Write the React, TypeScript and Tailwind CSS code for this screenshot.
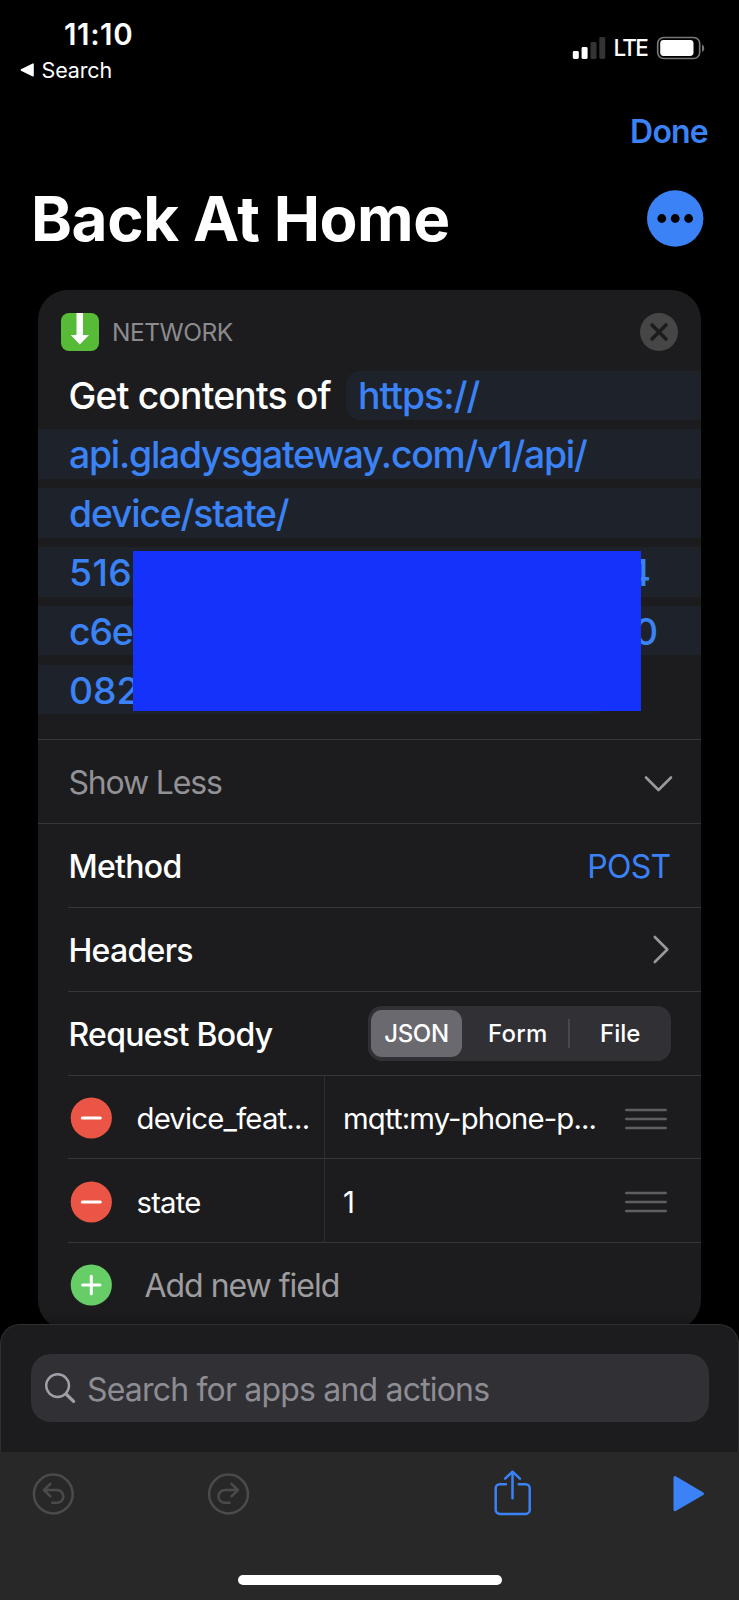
import type { ReactNode } from "react";

function StatusBar() {
  return (
    <div className="flex h-[96px] justify-between">
      <div className="flex flex-col pt-[16px]">
        <div className="pl-[64px] text-[29.5px] font-semibold leading-[36px] tracking-[0.02em] text-white">11:10</div>
        <div className="flex items-center pl-[20px] pt-[4px]">
          <svg width="15" height="14" viewBox="0 0 15 14" className="shrink-0">
            <path d="M1.4 7 L13 1.2 V12.8 Z" fill="#fff" stroke="#fff" strokeWidth="1.6" strokeLinejoin="round" />
          </svg>
          <span className="pl-[6.5px] text-[21.5px] leading-[28px] tracking-[-0.007em] text-white">Search</span>
        </div>
      </div>
      <div className="flex h-[95px] items-center pr-[34.5px]">
        <svg width="34" height="22" viewBox="0 0 34 22" className="mr-[8px]">
          <rect x="0.8" y="14" width="6" height="8" rx="1.4" fill="#fff" />
          <rect x="9.6" y="10" width="6" height="12" rx="1.4" fill="#fff" />
          <rect x="18.5" y="5" width="6" height="17" rx="1.4" fill="#333" />
          <rect x="27.3" y="0" width="6" height="22" rx="1.4" fill="#333" />
        </svg>
        <span className="w-[35px] whitespace-nowrap pt-px text-[22.5px] font-medium leading-[28px] tracking-[-0.08em] text-white">LTE</span>
        <svg width="49" height="24" viewBox="0 0 49 24" className="ml-[7px]">
          <rect x="1.7" y="1.5" width="42" height="21" rx="6" fill="none" stroke="#777" strokeWidth="1.7" />
          <rect x="4.2" y="4" width="33.3" height="16" rx="3.4" fill="#fff" />
          <path d="M46 8.5 C49 10 49 14.5 46 16 Z" fill="#777" />
        </svg>
      </div>
    </div>
  );
}

function UrlLine({ children }: { children?: ReactNode }) {
  return (
    <div className="mb-[9.2px] flex h-[49.6px] items-center whitespace-nowrap bg-[#1e222a] pl-[31px] pt-[2.5px] text-[37.3px] font-medium text-[#3b82f7]">
      {children}
    </div>
  );
}

function Row({ label, inset = true, children }: { label: string; inset?: boolean; children?: ReactNode }) {
  return (
    <div>
      <div className={inset ? "ml-[30px] h-px bg-[#363638]" : "h-px bg-[#363638]"} />
      <div className="flex h-[83px] items-center justify-between pl-[30.5px] pr-[30.5px] text-[32px] font-medium tracking-[-0.022em] text-white">
        <span className="pt-[3px]">{label}</span>
        {children}
      </div>
    </div>
  );
}

function Field({ name, value }: { name: string; value: string }) {
  return (
    <div className="ml-[30px] flex h-[83.5px] items-center border-t border-[#363638] text-[29.3px] text-white">
      <svg width="42" height="42" viewBox="0 0 42 42" className="ml-[2px] mt-[2px] shrink-0">
        <circle cx="21.3" cy="21" r="20.6" fill="#eb5545" />
        <path d="M12.3 21 H30.3" stroke="#fff" strokeWidth="3" strokeLinecap="round" />
      </svg>
      <div className="flex h-full w-[213px] items-center whitespace-nowrap border-r border-[#2e2e30] pl-[24.5px] pt-[4px] tracking-[-0.027em]">{name}</div>
      <div className="flex-1 whitespace-nowrap pl-[18px] pt-[4px] tracking-[-0.029em]">{value}</div>
      <svg width="42" height="22" viewBox="0 0 42 22" className="mr-[34px] mt-[3px] shrink-0">
        <path d="M1.2 2 H40.8 M1.2 11 H40.8 M1.2 20 H40.8" stroke="#5f5f62" strokeWidth="2.4" strokeLinecap="round" />
      </svg>
    </div>
  );
}

function ActionCard() {
  return (
    <section className="mx-[38px] h-[1040px] overflow-hidden rounded-[30px] bg-[#1c1c1e]">
      <header className="flex h-[80.6px] items-center pl-[23px] pr-[23px] pt-[3px]">
        <svg width="38" height="38" viewBox="0 0 38 38">
          <rect width="38" height="38" rx="8" fill="#57bb37" />
          <path d="M15.5 0 H22 V22 H28 L18.8 31.5 L9.8 22 H15.5 Z" fill="#fff" />
        </svg>
        <span className="flex-1 pl-[13px] pt-[2px] text-[24.5px] tracking-[-0.019em] text-[#8b8b8e]">NETWORK</span>
        <svg width="38" height="38" viewBox="0 0 38 38">
          <circle cx="19" cy="19" r="19" fill="#464646" />
          <path d="M12 12 L26 26 M26 12 L12 26" stroke="#1c1c1e" strokeWidth="3.6" strokeLinecap="round" />
        </svg>
      </header>

      <div className="relative h-[368.4px]">
        <div className="mb-[9.2px] flex h-[49.6px] items-center whitespace-nowrap pl-[30.5px] text-[37.3px] font-medium text-white">
          <span className="w-[277.5px] pt-[2px] tracking-[-0.022em]">Get contents of</span>
          <span className="flex h-full flex-1 items-center rounded-l-[14px] bg-[#1e222a] pl-[12px] pt-[2px] tracking-[-0.025em] text-[#3b82f7]">https://</span>
        </div>
        <UrlLine><span className="tracking-[-0.033em]">api.gladysgateway.com/v1/api/</span></UrlLine>
        <UrlLine><span className="tracking-[-0.031em]">device/state/</span></UrlLine>
        <UrlLine>
          <span className="w-[557.5px] tracking-[0.01em]">516</span>
          <span>4</span>
        </UrlLine>
        <UrlLine>
          <span className="w-[565px] tracking-[-0.03em]">c6e</span>
          <span>0</span>
        </UrlLine>
        <div className="flex h-[49.6px] w-[570px] items-center rounded-r-[14px] bg-[#1e222a] pl-[31px] pt-[2.5px] text-[37.3px] font-medium text-[#3b82f7]">082</div>
        <div className="absolute left-[95.3px] top-[180.3px] h-[160px] w-[507.7px] bg-[#1432f9]" />
      </div>

      <div className="flex h-[84px] items-center justify-between border-t border-[#363638] pl-[30.5px] pr-[28px] text-[32px] text-[#929296]">
        <span className="pt-[3px] tracking-[-0.037em]">Show Less</span>
        <svg width="29" height="18" viewBox="0 0 29 18" className="mt-[5px]">
          <path d="M2 2.5 L14.5 15 L27 2.5" fill="none" stroke="#98989d" strokeWidth="2.6" strokeLinecap="round" strokeLinejoin="round" />
        </svg>
      </div>
      <Row label="Method" inset={false}>
        <span className="pt-[3px] font-normal text-[#3b82f7]">POST</span>
      </Row>
      <Row label="Headers">
        <svg width="18" height="29" viewBox="0 0 18 29" className="mr-px mt-px">
          <path d="M2.8 2 L15.3 14.5 L2.8 27" fill="none" stroke="#98989d" strokeWidth="2.6" strokeLinecap="round" strokeLinejoin="round" />
        </svg>
      </Row>
      <Row label="Request Body">
        <div className="flex h-[55px] w-[303px] items-center rounded-[14px] bg-[#313035] px-[3.5px] text-[24px] tracking-[-0.01em]">
          <div className="flex h-[47px] w-[91px] items-center justify-center rounded-[11px] bg-[#6a696f] pt-[2px] tracking-[-0.015em]">JSON</div>
          <div className="flex-1 pl-[6px] pt-[2px] text-center font-[450] tracking-[0.01em]">Form</div>
          <div className="h-[29px] w-[2px] bg-[#49494d]" />
          <div className="w-[97.5px] pl-[4px] pt-[2px] text-center font-[450] tracking-[0em]">File</div>
        </div>
      </Row>
      <Field name="device_feat..." value="mqtt:my-phone-p..." />
      <Field name="state" value="1" />
      <div className="ml-[30px] flex h-[84px] items-center border-t border-[#363638] text-[32px] text-[#9d9d9f]">
        <svg width="42" height="42" viewBox="0 0 42 42" className="ml-[2px] mt-px shrink-0">
          <circle cx="21.3" cy="21" r="20.6" fill="#67ce67" />
          <path d="M12.6 21 H30 M21.3 12.3 V29.7" stroke="#fff" strokeWidth="3" strokeLinecap="round" />
        </svg>
        <span className="pl-[32.5px] pt-[3px] tracking-[-0.032em]">Add new field</span>
      </div>
    </section>
  );
}

function BottomPanel() {
  return (
    <footer className="absolute inset-x-0 bottom-0 h-[276.5px]">
      <div className="h-[128.5px] rounded-t-[20px] border-x border-t border-[#303032] bg-[#1c1c1e] px-[29.5px] pt-[29.5px] shadow-[0_-3px_8px_rgba(0,0,0,0.25)]">
        <div className="flex h-[68px] items-center rounded-[20px] bg-[#313035] pl-[14.5px] text-[32px] text-[#8d8d93]">
          <svg width="31" height="31" viewBox="0 0 31 31">
            <circle cx="12.6" cy="12.6" r="11.4" fill="none" stroke="#a0a0a8" strokeWidth="2.4" />
            <path d="M21 21 L28.6 28.3" stroke="#a0a0a8" strokeWidth="3.2" strokeLinecap="round" />
          </svg>
          <span className="pl-[11px] pt-[3px] tracking-[-0.0255em]">Search for apps and actions</span>
        </div>
      </div>
      <div className="flex h-[148px] flex-col items-center justify-between bg-[#282828] pb-[15px] pt-[17px]">
        <div className="flex w-full items-center pl-[32px] pr-[34.5px]">
          <svg width="42" height="48" viewBox="0 0 42 48" fill="none" stroke="#4b4b4b" strokeWidth="2.5" strokeLinecap="round" strokeLinejoin="round">
            <circle cx="21.3" cy="25" r="19.4" />
            <path d="M18.3 14.8 L12 21 L18.3 27.3 M12 21 H25 A6.4 6.4 0 0 1 25 33.8 H20.2" />
          </svg>
          <svg width="42" height="48" viewBox="0 0 42 48" fill="none" stroke="#4b4b4b" strokeWidth="2.5" strokeLinecap="round" strokeLinejoin="round" className="ml-[133px]">
            <circle cx="21.5" cy="25" r="19.4" />
            <path d="M24.5 14.8 L31 21 L24.5 27.3 M31 21 H17.8 A6.4 6.4 0 0 0 17.8 33.8 H22.7" />
          </svg>
          <svg width="38" height="48" viewBox="0 0 38 48" fill="none" stroke="#3b82f7" strokeWidth="2.5" strokeLinecap="round" strokeLinejoin="round" className="ml-[244px]">
            <path d="M12.9 15.3 H6.7 A4 4 0 0 0 2.7 19.3 V40.9 A4 4 0 0 0 6.7 44.9 H32.7 A4 4 0 0 0 36.7 40.9 V19.3 A4 4 0 0 0 32.7 15.3 H25.7" />
            <path d="M19.5 29.3 V2.7 M12.1 9.7 L19.5 2.7 L26.9 9.7" />
          </svg>
          <svg width="32" height="48" viewBox="0 0 32 48" className="ml-auto">
            <path d="M2 8.6 L29.5 24.7 L2 40.6 Z" fill="#3b82f7" stroke="#3b82f7" strokeWidth="3" strokeLinejoin="round" />
          </svg>
        </div>
        <div className="h-[10px] w-[264px] rounded-full bg-white" />
      </div>
    </footer>
  );
}

export default function App() {
  return (
    <main className="relative h-[1600px] w-[739px] overflow-hidden bg-black font-['Inter','Liberation_Sans',sans-serif]">
      <StatusBar />
      <div className="flex h-[70px] items-center justify-end pr-[31px] pt-px text-[32px] font-semibold text-[#3b82f7]">
        <span className="tracking-[-0.025em]">Done</span>
      </div>
      <div className="flex h-[124px] items-center justify-between pb-[20px] pl-[31px] pr-[35.5px]">
        <h1 className="whitespace-nowrap pt-[2px] text-[62px] font-bold leading-none tracking-[-0.007em] text-white">Back At Home</h1>
        <svg width="57" height="57" viewBox="0 0 57 57">
          <circle cx="28.2" cy="28.5" r="28.2" fill="#3b82f7" />
          <circle cx="14.8" cy="28.5" r="4.4" fill="#000" />
          <circle cx="28.2" cy="28.5" r="4.4" fill="#000" />
          <circle cx="41.6" cy="28.5" r="4.4" fill="#000" />
        </svg>
      </div>
      <ActionCard />
      <BottomPanel />
    </main>
  );
}
